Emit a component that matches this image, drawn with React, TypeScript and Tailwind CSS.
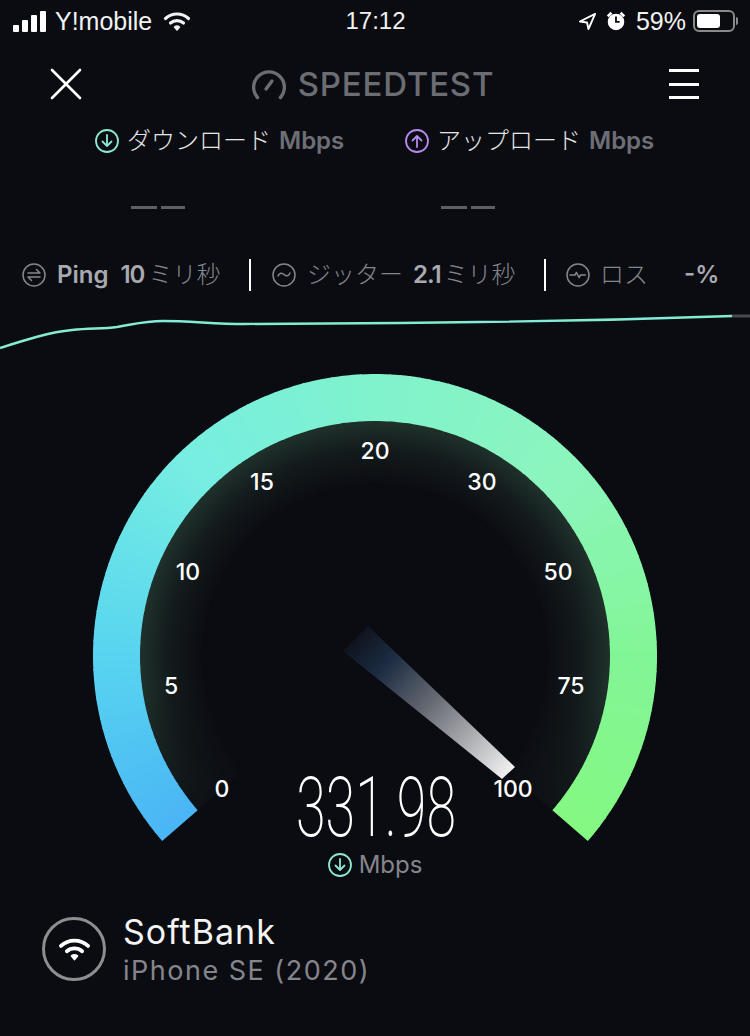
import { FC } from "react";

const FONT = "font-['Inter','Noto_Sans_CJK_JP',sans-serif]";

// arc band from a0 to a1, angles clockwise from straight up
const polar = (r: number, deg: number): [number, number] => {
  const a = (deg * Math.PI) / 180;
  return [375 + r * Math.sin(a), 655 - r * Math.cos(a)];
};

const bandPath = (r0: number, r1: number, a0: number, a1: number) => {
  const [x0, y0] = polar(r1, a0);
  const [x1, y1] = polar(r1, a1);
  const [x2, y2] = polar(r0, a1);
  const [x3, y3] = polar(r0, a0);
  const large = a1 - a0 > 180 ? 1 : 0;
  return `M${x0} ${y0}A${r1} ${r1} 0 ${large} 1 ${x1} ${y1}L${x2} ${y2}A${r0} ${r0} 0 ${large} 0 ${x3} ${y3}Z`;
};

const STOPS: [number, number[]][] = [
  [-131, [74, 181, 245]],
  [-90, [88, 212, 240]],
  [-45, [118, 238, 226]],
  [0, [128, 242, 204]],
  [45, [140, 245, 190]],
  [90, [130, 246, 150]],
  [131, [132, 248, 130]],
];

const colorAt = (deg: number) => {
  for (let i = 0; i < STOPS.length - 1; i++) {
    const [a, ca] = STOPS[i];
    const [b, cb] = STOPS[i + 1];
    if (deg <= b) {
      const t = (deg - a) / (b - a);
      return `rgb(${ca.map((c, j) => Math.round(c + (cb[j] - c) * t)).join(",")})`;
    }
  }
  return "rgb(132,248,130)";
};

const segments = Array.from({ length: 131 }, (_, i) => -131 + i * 2);

const Gauge: FC = () => (
  <svg viewBox="0 312 750 540" className="absolute inset-0 h-full w-full">
    <defs>
      <radialGradient id="innerGlow" gradientUnits="userSpaceOnUse" cx="375" cy="655" r="237">
        <stop offset="0.72" stopColor="#22352e" stopOpacity="0" />
        <stop offset="0.88" stopColor="#22352e" stopOpacity="0.4" />
        <stop offset="1" stopColor="#22352e" stopOpacity="0.95" />
      </radialGradient>
      <linearGradient id="glowFade" gradientUnits="userSpaceOnUse" x1="0" y1="690" x2="0" y2="810">
        <stop offset="0" stopColor="white" />
        <stop offset="1" stopColor="white" stopOpacity="0.15" />
      </linearGradient>
      <mask id="glowMask" maskUnits="userSpaceOnUse" x="0" y="312" width="750" height="540">
        <rect x="0" y="312" width="750" height="540" fill="url(#glowFade)" />
      </mask>
      <linearGradient id="needle" gradientUnits="userSpaceOnUse" x1="352" y1="632" x2="510" y2="772">
        <stop offset="0" stopColor="#1a2a40" stopOpacity="0.15" />
        <stop offset="0.22" stopColor="#1c2c42" />
        <stop offset="0.5" stopColor="#666a72" />
        <stop offset="1" stopColor="#f2f2f2" />
      </linearGradient>
    </defs>
    <path d={bandPath(150, 237, -131, 131)} fill="url(#innerGlow)" mask="url(#glowMask)" />
    {segments.map((deg) => (
      <path key={deg} d={bandPath(235, 282, deg, Math.min(deg + 2.3, 131))} fill={colorAt(deg + 1)} />
    ))}
    <polygon points="368,625 515,766 502,778 343,650" fill="url(#needle)" />
  </svg>
);

const GAUGE_LABELS = [
  { text: "0", x: 222, y: 788 },
  { text: "5", x: 171, y: 685 },
  { text: "10", x: 188, y: 571 },
  { text: "15", x: 262, y: 481 },
  { text: "20", x: 375, y: 450 },
  { text: "30", x: 482, y: 481 },
  { text: "50", x: 558, y: 571 },
  { text: "75", x: 571, y: 685 },
  { text: "100", x: 513, y: 788 },
];

const ArrowCircle: FC<{ up?: boolean; color: string }> = ({ up, color }) => (
  <svg viewBox="0 0 24 24" className="h-6 w-6" fill="none" stroke={color} strokeWidth="1.8" strokeLinecap="round" strokeLinejoin="round">
    <circle cx="12" cy="12" r="11" />
    {up ? <path d="M12 18V7M7.500 11.500 12 7l4.500 4.500" /> : <path d="M12 6v11M7.500 12.500 12 17l4.500-4.500" />}
  </svg>
);

const StatIcon: FC<{ d: string }> = ({ d }) => (
  <svg viewBox="0 0 24 24" className="h-6 w-6 shrink-0" fill="none" stroke="#85868c" strokeWidth="1.5" strokeLinecap="round" strokeLinejoin="round">
    <circle cx="12" cy="12" r="11" />
    <path d={d} />
  </svg>
);

const WifiGlyph: FC<{ className: string }> = ({ className }) => (
  <svg viewBox="0 0 28 21" className={className} fill="none" stroke="currentColor" strokeWidth="3.2" strokeLinecap="round">
    <path d="M2.500 7.500a17 17 0 0 1 23 0" />
    <path d="M7.500 12a10 10 0 0 1 13 0" />
    <path d="M11.500 16a4 4 0 0 1 5 0L14 19z" fill="currentColor" strokeWidth="1.500" strokeLinejoin="round" />
  </svg>
);

export default function App() {
  return (
    <div className={`${FONT} flex h-[1036px] w-[750px] flex-col overflow-hidden bg-[#0b0c12] text-white`}>
      {/* status bar */}
      <div className="flex h-10 items-center justify-between pl-[13px] pr-[12px] pt-[2px] text-[25px] leading-none text-[#f2f2f2]">
        <div className="flex w-[300px] items-center">
          <div className="flex items-end gap-[3px]">
            <span className="h-[7px] w-[6px] rounded-[1px] bg-white" />
            <span className="h-[12px] w-[6px] rounded-[1px] bg-white" />
            <span className="h-[17px] w-[6px] rounded-[1px] bg-white" />
            <span className="h-[21px] w-[6px] rounded-[1px] bg-white" />
          </div>
          <span className="ml-[9px] font-['Liberation_Sans',sans-serif]">Y!mobile</span>
          <WifiGlyph className="ml-[11px] h-[21px] w-[28px]" />
        </div>
        <span className="font-['Liberation_Sans',sans-serif] text-[24px] font-medium">17:12</span>
        <div className="flex w-[300px] items-center justify-end">
          <svg viewBox="0 0 20 20" className="h-[19px] w-[19px]" fill="none" stroke="white" strokeWidth="2" strokeLinejoin="round">
            <path d="M18 2 2 10l7.500 1L11 18z" />
          </svg>
          <svg viewBox="0 0 24 24" className="ml-[8px] h-[22px] w-[22px]" fill="white">
            <circle cx="12" cy="13" r="9" />
            <path d="M2 6l4-4 2 2-4 4zM22 6l-4-4-2 2 4 4z" />
            <path d="M12 7v6h4" stroke="#0b0c12" strokeWidth="2" fill="none" />
          </svg>
          <span className="ml-[9px] font-['Liberation_Sans',sans-serif]">59%</span>
          <div className="ml-[7px] flex h-[22px] w-[42px] items-center rounded-[6px] border-2 border-[#8a8a8a] p-[2px]">
            <div className="h-full w-[23px] rounded-[3px] bg-white" />
          </div>
          <span className="ml-[1px] h-[8px] w-[2px] rounded-r bg-[#8a8a8a]" />
        </div>
      </div>

      {/* header */}
      <div className="flex h-[84px] items-center justify-between pl-[50px] pr-[51px] pt-[4px]">
        <svg viewBox="0 0 32 32" className="h-8 w-8" stroke="white" strokeWidth="2.6" strokeLinecap="round">
          <path d="M2 2 30 30M30 2 2 30" />
        </svg>
        <div className="mr-[5px] flex items-center gap-[12px] text-[#6c6d72]">
          <svg viewBox="0 0 34 34" className="h-[34px] w-[34px]" fill="none" stroke="currentColor" strokeWidth="3.4" strokeLinecap="round">
            <path d="M5.500 30.500a15.400 15.400 0 1 1 23 0" />
            <path d="M14 22l6-8" />
          </svg>
          <span className="text-[33px] font-medium leading-none tracking-[0.8px]">SPEEDTEST</span>
        </div>
        <div className="flex h-[30px] w-[30px] flex-col justify-between">
          <span className="h-[3px] bg-white" />
          <span className="h-[3px] bg-white" />
          <span className="h-[3px] bg-white" />
        </div>
      </div>

      {/* download / upload */}
      <div className="mt-[5px] flex pl-[95px] text-[24px] leading-none">
        <div className="flex w-[310px] items-center gap-[8px]">
          <ArrowCircle color="#8be8d4" />
          <span className="font-light text-[#e6e6e6]">ダウンロード</span>
          <span className="font-semibold text-[#6e6f76]">Mbps</span>
        </div>
        <div className="flex items-center gap-[8px]">
          <ArrowCircle up color="#b889ee" />
          <span className="font-light text-[#e6e6e6]">アップロード</span>
          <span className="font-semibold text-[#6e6f76]">Mbps</span>
        </div>
      </div>
      <div className="mt-[53px] flex gap-[256px] pl-[131px]">
        <div className="flex gap-[4px]"><span className="h-[3px] w-[26px] bg-[#5e5f64]" /><span className="h-[3px] w-[24px] bg-[#5e5f64]" /></div>
        <div className="flex gap-[4px]"><span className="h-[3px] w-[26px] bg-[#5e5f64]" /><span className="h-[3px] w-[24px] bg-[#5e5f64]" /></div>
      </div>

      {/* ping row */}
      <div className="mt-[50px] flex h-[32px] items-center pl-[22px] text-[24px] leading-none text-[#85868c]">
        <div className="flex w-[227px] items-center">
          <StatIcon d="M6 10h12l-3.500-3.500M18 14H6l3.500 3.500" />
          <span className="ml-[11px] font-semibold text-[#a9aab0]">Ping</span>
          <span className="ml-[12px] font-semibold tracking-[-1px] text-[#a9aab0]">10</span>
          <span className="ml-[4px] font-light">ミリ秒</span>
        </div>
        <span className="h-[32px] w-[2px] bg-white" />
        <div className="ml-[21px] flex w-[272px] items-center">
          <StatIcon d="M6 13c1.500-3.500 4-3.500 6-1.500s4.500 2 6-1.500" />
          <span className="ml-[11px] font-light">ジッター</span>
          <span className="ml-[10px] font-semibold tracking-[-1px] text-[#a9aab0]">2.1</span>
          <span className="ml-[3px] font-light">ミリ秒</span>
        </div>
        <span className="h-[32px] w-[2px] bg-white" />
        <div className="ml-[20px] flex items-center">
          <StatIcon d="M4 12h5l1.500-2.500 2.500 5 1.500-2.500h5" />
          <span className="ml-[10px] font-light">ロス</span>
          <span className="ml-[36px] font-semibold text-[#a9aab0]">-%</span>
        </div>
      </div>

      {/* ping trace */}
      <svg viewBox="0 0 750 44" className="mt-[23px] h-[44px] w-[750px] shrink-0">
        <path
          d="M0 34C25 26 50 18 72 16C90 14 102 15 117 13C135 10 145 7 163 7C190 7 215 10 244 10C320 10 400 9 478 8C570 7 650 5 732 2"
          fill="none"
          stroke="#84ecd2"
          strokeWidth="2.4"
        />
        <path d="M732 2H750" stroke="#4a4b50" strokeWidth="3" />
      </svg>

      {/* gauge */}
      <div className="relative -mt-[45px] h-[540px] w-[750px] shrink-0">
        <Gauge />
        {GAUGE_LABELS.map((l) => (
          <span
            key={l.text}
            className="absolute -translate-x-1/2 -translate-y-1/2 text-[23px] font-medium leading-none text-white"
            style={{ left: l.x, top: l.y - 312 }}
          >
            {l.text}
          </span>
        ))}
        <span className="absolute left-[296px] top-[460px] origin-left scale-x-[0.64] font-['Roboto',sans-serif] text-[84px] font-extralight leading-[70px] text-white">
          331.98
        </span>
      </div>

      {/* unit under the reading */}
      <div className="flex items-center justify-center gap-[7px] text-[24px] leading-none text-[#85868c]">
        <ArrowCircle color="#8be8d4" />
        <span>Mbps</span>
      </div>

      {/* network */}
      <div className="mt-[31px] flex items-center pl-[42px]">
        <div className="flex h-[64px] w-[64px] items-center justify-center rounded-full border-[3px] border-[#8d8e90]">
          <WifiGlyph className="h-[25px] w-[33px]" />
        </div>
        <div className="ml-[17px] flex flex-col pt-[4px]">
          <span className="text-[34px] leading-[40px] tracking-[1px] text-[#f4f4f4]">SoftBank</span>
          <span className="text-[27px] leading-[38px] tracking-[1.5px] text-[#85868c]">iPhone SE (2020)</span>
        </div>
      </div>
    </div>
  );
}
